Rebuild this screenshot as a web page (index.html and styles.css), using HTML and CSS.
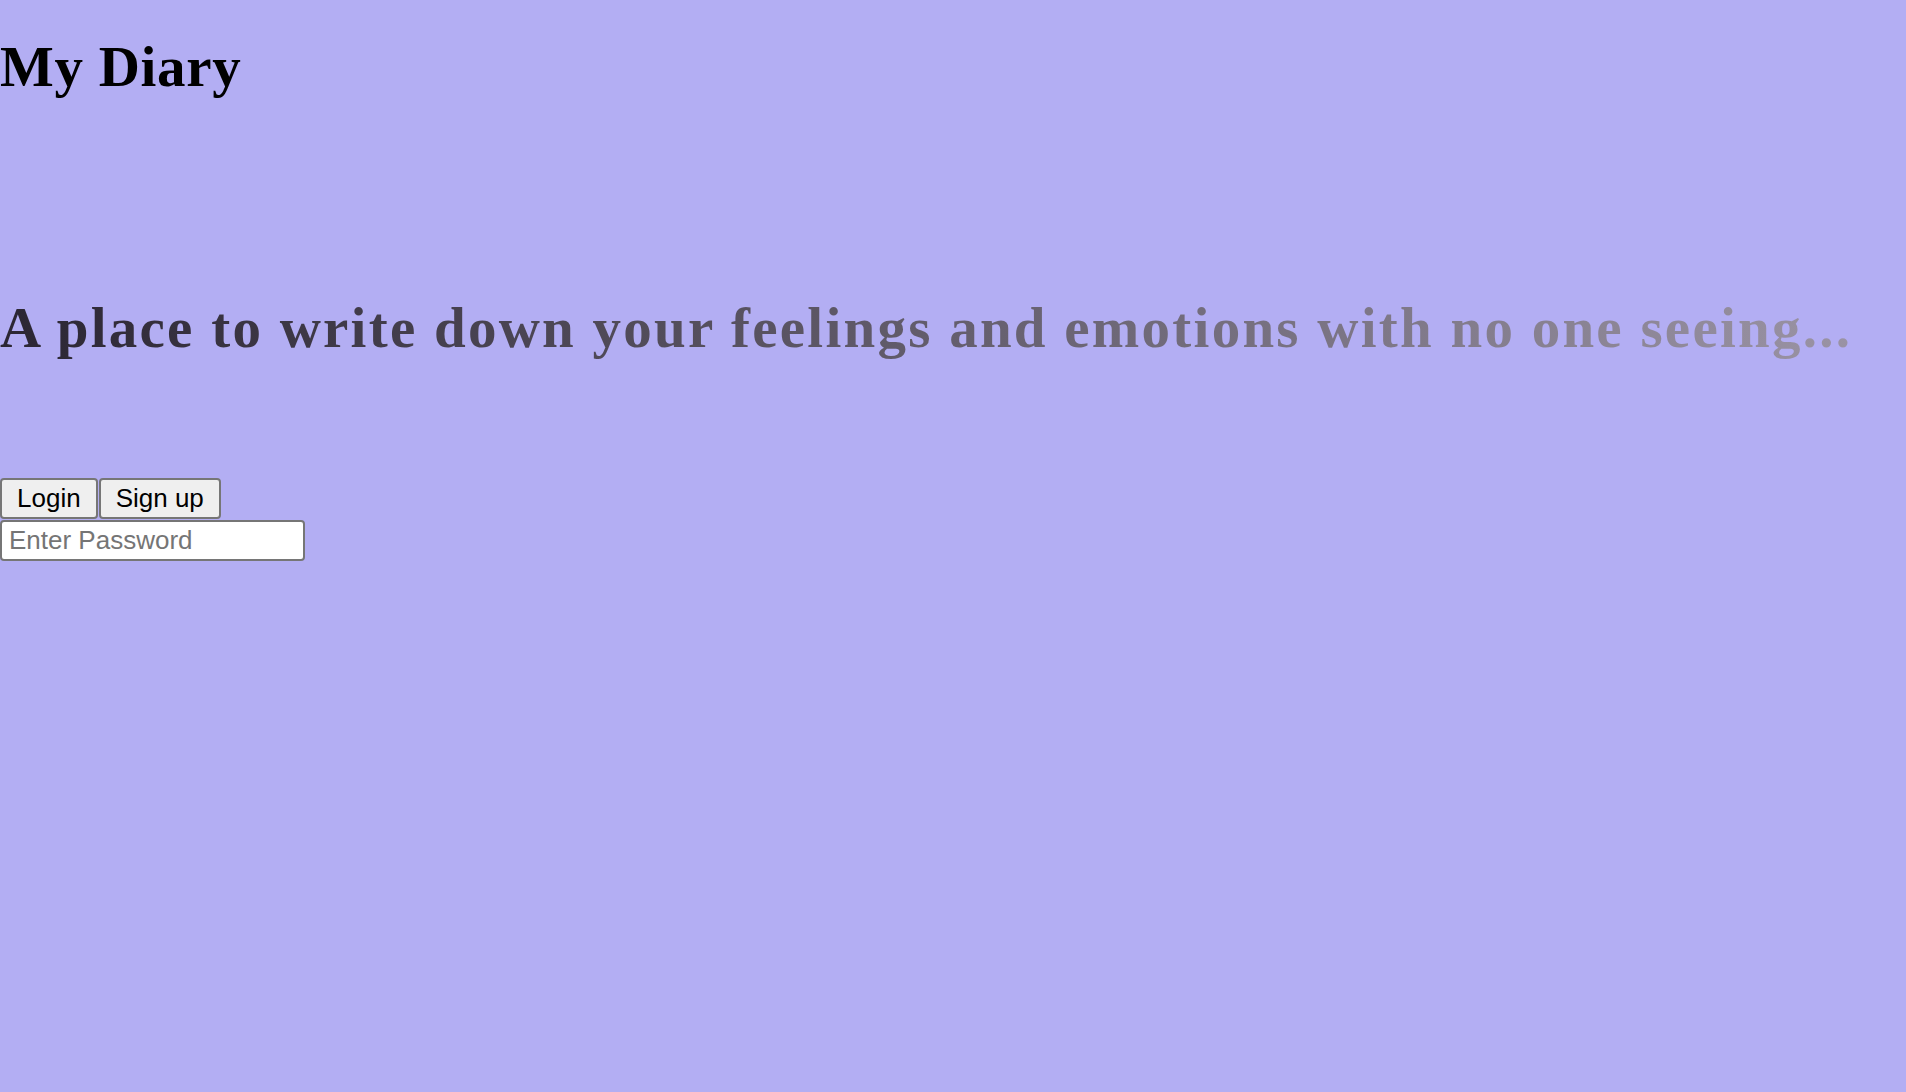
FILE: index.html
```html
<!DOCTYPE html>
<html lang="en">
<head>
<meta charset="utf-8">
<title>My Diary</title>
<link rel="stylesheet" href="styles.css">
</head>
<body>
<header class="top">
  <h1 class="title">My Diary</h1>
</header>
<main class="main">
  <h2 class="tagline">A place to write down your feelings and emotions with no one seeing...</h2>
  <div class="auth">
    <div class="auth-buttons">
      <button class="btn" type="button">Login</button><button class="btn" type="button">Sign up</button>
    </div>
    <input class="password" type="password" placeholder="Enter Password">
  </div>
</main>
</body>
</html>
```
FILE: styles.css
```css
html, body {
  margin: 0;
  padding: 0;
  background: #b3aef3;
  min-height: 100%;
}
body {
  font-family: "Liberation Serif", serif;
}
.top {
  padding-top: 33px;
}
.title {
  margin: 0;
  font-family: "Liberation Serif", serif;
  font-weight: 700;
  font-size: 57px;
  line-height: 68px;
  letter-spacing: 0.7px;
  color: #000;
}
.main {
  padding-top: 193px;
}
.tagline {
  margin: 0;
  font-family: "Liberation Serif", serif;
  font-weight: 700;
  font-size: 57px;
  line-height: 68px;
  letter-spacing: 2.25px;
  display: inline-block;
  background: linear-gradient(to right, #2b2633, #9a93a4);
  -webkit-background-clip: text;
  background-clip: text;
  color: transparent;
  white-space: nowrap;
}
.auth {
  padding-top: 116px;
}
.auth-buttons {
  display: flex;
}
.btn {
  font-family: "Liberation Sans", Arial, sans-serif;
  font-size: 26px;
  padding: 3px 15px;
  height: 41px;
  color: #000;
  background: #efefef;
  border: 2px solid #767676;
  border-radius: 4px;
  margin: 0 1px 0 0;
}
.password {
  display: block;
  box-sizing: border-box;
  width: 305px;
  height: 41px;
  margin: 1px 0 0 0;
  padding: 2px 7px;
  font-family: "Liberation Sans", Arial, sans-serif;
  font-size: 26px;
  border: 2px solid #767676;
  border-radius: 4px;
  background: #fff;
}
.password::placeholder {
  color: #757575;
}
```
